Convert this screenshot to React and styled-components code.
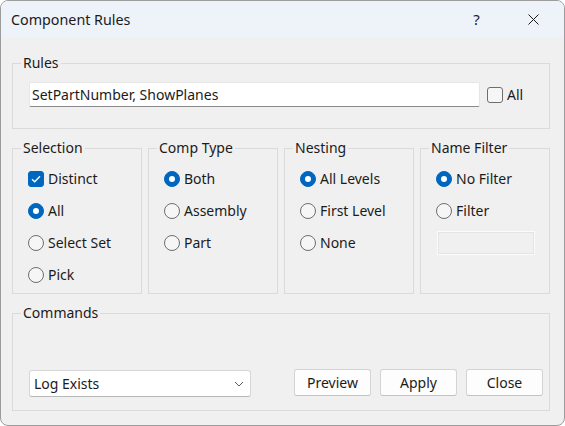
import React from "react";
import styled, { createGlobalStyle } from "styled-components";

const GlobalStyle = createGlobalStyle`
  html, body { margin: 0; padding: 0; background: #ffffff; }
  body { font-family: "Noto Sans", "Open Sans", Arial, sans-serif; color: #1b1b1b; }
  * { box-sizing: border-box; }
`;

const Window = styled.div`
  width: 565px;
  height: 426px;
  border: 1px solid #9c9c9c;
  border-radius: 8px;
  overflow: hidden;
  background: #f0f0f0;
  display: flex;
  flex-direction: column;
  font-size: 14px;
`;

const TitleBar = styled.div`
  height: 36px;
  flex: none;
  background: #eef2f9;
  display: flex;
  align-items: center;
  padding-left: 10px;
  padding-right: 2px;
`;

const Title = styled.div`
  flex: 1;
  font-size: 14.3px;
  line-height: 20px;
  margin-top: 2px;
`;

const CaptionButton = styled.div`
  width: 57px;
  height: 36px;
  display: flex;
  align-items: center;
  justify-content: center;
  font-size: 15px;
  color: #1b1b1b;
`;

const Content = styled.div`
  flex: 1;
  display: flex;
  flex-direction: column;
  gap: 9px;
  padding: 16px 14px 14px 11px;
`;

const Group = styled.fieldset`
  margin: 0;
  padding: 0;
  min-width: 0;
  border: 1px solid #dadada;
  flex: ${(p) => (p.$grow ? 1 : "none")};
  display: block;
`;

const Legend = styled.legend`
  margin-left: 8px;
  padding: 0 2px;
  line-height: 20px;
  font-size: 14px;
`;

const RulesBody = styled.div`
  display: flex;
  align-items: center;
  padding: 9px 0 21px 16px;
`;

const TextInput = styled.div`
  width: 451px;
  height: 25px;
  background: #ffffff;
  border: 1px solid #e6e6e6;
  border-bottom: 1px solid #8a8a8a;
  border-radius: 2px;
  padding-left: 2px;
  display: flex;
  align-items: center;
  font-size: 14px;
`;

const OptionLabel = styled.label`
  display: flex;
  align-items: center;
  gap: 4px;
  height: 20px;
  line-height: 20px;
  font-size: 14px;
  white-space: nowrap;
  margin-left: ${(p) => p.$ml || 0}px;
  margin-top: ${(p) => p.$mt || 0}px;
`;

const BoxMark = styled.span`
  width: 16px;
  height: 16px;
  flex: none;
  border-radius: 3px;
  display: flex;
  align-items: center;
  justify-content: center;
  background: ${(p) => (p.$checked ? "#0067c0" : "#f6f6f6")};
  border: 1px solid ${(p) => (p.$checked ? "#0067c0" : "#6e6e6e")};
`;

const RadioMark = styled.span`
  width: 16px;
  height: 16px;
  flex: none;
  border-radius: 50%;
  display: flex;
  align-items: center;
  justify-content: center;
  background: ${(p) => (p.$checked ? "#0067c0" : "#f6f6f6")};
  border: 1px solid ${(p) => (p.$checked ? "#0067c0" : "#6e6e6e")};
  &::after {
    content: "";
    display: ${(p) => (p.$checked ? "block" : "none")};
    width: 6px;
    height: 6px;
    border-radius: 50%;
    background: #ffffff;
  }
`;

const OptionsRow = styled.div`
  display: flex;
  gap: 6px;
`;

const OptionList = styled.div`
  display: flex;
  flex-direction: column;
  gap: 12px;
  padding: 11px 0 8px 15px;
`;

const DisabledInput = styled.div`
  width: 98px;
  height: 24px;
  margin-left: 1px;
  margin-top: -2px;
  background: #f0f0f0;
  border: 1px solid #fbfbfb;
  outline: 1px solid #e4e4e4;
  outline-offset: -2px;
`;

const CommandsBody = styled.div`
  display: flex;
  align-items: flex-end;
  padding: 46px 6px 13px 16px;
`;

const Combo = styled.div`
  width: 222px;
  height: 27px;
  background: #ffffff;
  border: 1px solid #d6d6d6;
  border-bottom-color: #b8b8b8;
  border-radius: 3px;
  display: flex;
  align-items: center;
  justify-content: space-between;
  padding: 0 6px 0 4px;
  font-size: 14px;
  margin-right: auto;
`;

const Buttons = styled.div`
  display: flex;
  gap: 9px;
  margin-bottom: 1px;
`;

const Button = styled.div`
  width: 77px;
  height: 27px;
  background: #fdfdfd;
  border: 1px solid #d4d4d4;
  border-bottom-color: #c2c2c2;
  border-radius: 3px;
  display: flex;
  align-items: center;
  justify-content: center;
  font-size: 14px;
`;

const Check = () => (
  <svg width="10" height="8" viewBox="0 0 10 8">
    <path d="M1 4.2 L3.7 6.8 L9 1.2" fill="none" stroke="#ffffff" strokeWidth="1.3" />
  </svg>
);

const Option = ({ type, checked, children, ...rest }) => (
  <OptionLabel {...rest}>
    {type === "check" ? (
      <BoxMark $checked={checked}>{checked && <Check />}</BoxMark>
    ) : (
      <RadioMark $checked={checked} />
    )}
    <span>{children}</span>
  </OptionLabel>
);

const groups = [
  {
    title: "Selection",
    items: [
      { label: "Distinct", type: "check", checked: true },
      { label: "All", checked: true },
      { label: "Select Set" },
      { label: "Pick" },
    ],
  },
  {
    title: "Comp Type",
    items: [{ label: "Both", checked: true }, { label: "Assembly" }, { label: "Part" }],
  },
  {
    title: "Nesting",
    items: [{ label: "All Levels", checked: true }, { label: "First Level" }, { label: "None" }],
  },
  {
    title: "Name Filter",
    items: [{ label: "No Filter", checked: true }, { label: "Filter" }],
    input: true,
  },
];

export default function App() {
  return (
    <>
      <GlobalStyle />
      <Window>
        <TitleBar>
          <Title>Component Rules</Title>
          <CaptionButton>?</CaptionButton>
          <CaptionButton>
            <svg width="11" height="11" viewBox="0 0 11 11">
              <path d="M0.5 0.5 L10.5 10.5 M10.5 0.5 L0.5 10.5" stroke="#1b1b1b" strokeWidth="1" />
            </svg>
          </CaptionButton>
        </TitleBar>
        <Content>
          <Group>
            <Legend>Rules</Legend>
            <RulesBody>
              <TextInput>SetPartNumber, ShowPlanes</TextInput>
              <Option type="check" $ml={7}>All</Option>
            </RulesBody>
          </Group>
          <OptionsRow>
            {groups.map((g) => (
              <Group key={g.title} $grow>
                <Legend>{g.title}</Legend>
                <OptionList>
                  {g.items.map((it) => (
                    <Option key={it.label} type={it.type} checked={it.checked}>
                      {it.label}
                    </Option>
                  ))}
                  {g.input && <DisabledInput />}
                </OptionList>
              </Group>
            ))}
          </OptionsRow>
          <Group>
            <Legend>Commands</Legend>
            <CommandsBody>
              <Combo>
                <span>Log Exists</span>
                <svg width="10" height="6" viewBox="0 0 10 6">
                  <path d="M1 1 L5 5 L9 1" fill="none" stroke="#5a5a5a" strokeWidth="1" />
                </svg>
              </Combo>
              <Buttons>
                <Button>Preview</Button>
                <Button>Apply</Button>
                <Button>Close</Button>
              </Buttons>
            </CommandsBody>
          </Group>
        </Content>
      </Window>
    </>
  );
}
